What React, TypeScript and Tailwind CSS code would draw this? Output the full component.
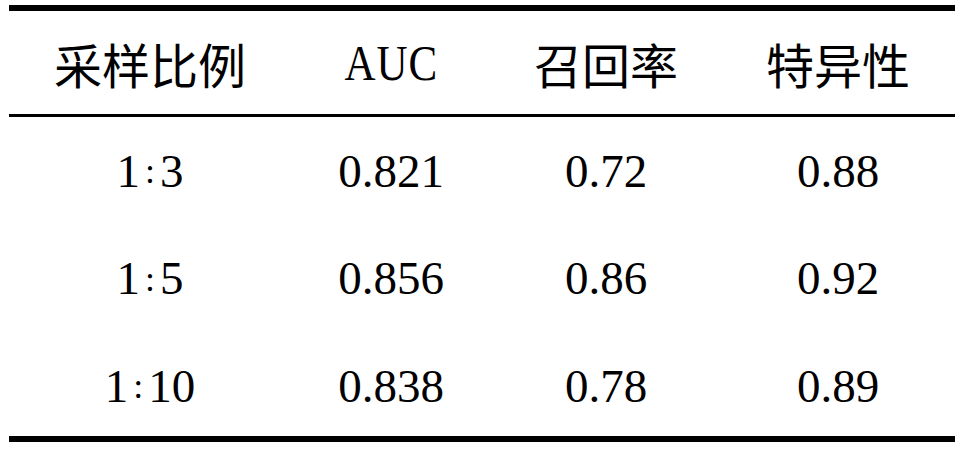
const serif = "font-['Liberation_Serif','Times_New_Roman',serif]";
const cjk = "font-['Noto_Sans_CJK_SC',sans-serif]";

const cols = 'grid grid-cols-[282px_200px_230px_234px]';

const rows = [
  { ratio: ['1', '3'], auc: '0.821', recall: '0.72', spec: '0.88', h: 'h-[108px]' },
  { ratio: ['1', '5'], auc: '0.856', recall: '0.86', spec: '0.92', h: 'h-[107px]' },
  { ratio: ['1', '10'], auc: '0.838', recall: '0.78', spec: '0.89', h: 'h-[104px] pt-[4px]' },
];

function Cell({ children, className = '' }: { children: React.ReactNode; className?: string }) {
  return (
    <div className={`flex items-center justify-center leading-none text-black ${className}`}>
      {children}
    </div>
  );
}

export default function App() {
  return (
    <div className="h-[450px] w-[963px] bg-white pl-[9px] pt-[5px]">
      <div className="w-[946px]">
        {/* 顶线 */}
        <div className="h-[6px] bg-black" />

        {/* 表头 */}
        <div className={`${cols} h-[103px]`}>
          <Cell className={`${cjk} text-[48px]`}>采样比例</Cell>
          <Cell className={serif}>
            <span className="inline-block scale-x-[0.86] text-[50px] tracking-[1px]">AUC</span>
          </Cell>
          <Cell className={`${cjk} text-[48px]`}>召回率</Cell>
          <Cell className={`${cjk} text-[48px]`}>特异性</Cell>
        </div>

        {/* 栏目线 */}
        <div className="h-[3px] bg-black" />

        {rows.map((r) => (
          <div key={r.auc} className={`${cols} ${r.h} ${serif} text-[47px]`}>
            <Cell>
              <span>{r.ratio[0]}</span>
              <span className="mx-[5px] align-[4px] text-[36px]">:</span>
              <span>{r.ratio[1]}</span>
            </Cell>
            <Cell>{r.auc}</Cell>
            <Cell>{r.recall}</Cell>
            <Cell>{r.spec}</Cell>
          </div>
        ))}

        {/* 底线 */}
        <div className="h-[6px] bg-black" />
      </div>
    </div>
  );
}
